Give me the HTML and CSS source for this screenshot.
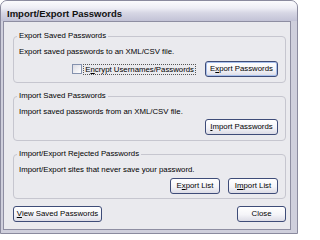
FILE: index.html
```
<!DOCTYPE html>
<html>
<head>
<meta charset="utf-8">
<link rel="stylesheet" href="styles.css">
</head>
<body>
<div class="window">
  <div class="titlebar">Import/Export Passwords</div>
  <div class="client">
    <fieldset class="group g1">
      <legend>Export Saved Passwords</legend>
      <div class="desc">Export saved passwords to an XML/CSV file.</div>
      <div class="row">
        <span class="check"></span>
        <span class="checklabel">E<u>n</u>crypt Usernames/Passwords</span>
        <span class="btn btn-focus w73">E<u>x</u>port Passwords</span>
      </div>
    </fieldset>
    <fieldset class="group g2">
      <legend>Import Saved Passwords</legend>
      <div class="desc">Import saved passwords from an XML/CSV file.</div>
      <div class="row">
        <span class="btn w73"><u>I</u>mport Passwords</span>
      </div>
    </fieldset>
    <fieldset class="group g3">
      <legend>Import/Export Rejected Passwords</legend>
      <div class="desc">Import/Export sites that never save your password.</div>
      <div class="row gap8">
        <span class="btn w50">E<u>x</u>port List</span>
        <span class="btn w50">I<u>m</u>port List</span>
      </div>
    </fieldset>
    <div class="bottom">
      <span class="btn w89"><u>V</u>iew Saved Passwords</span>
      <span class="btn w49">Close</span>
    </div>
  </div>
</div>
</body>
</html>
```
FILE: styles.css
```
html, body {
  margin: 0;
  padding: 0;
  background: #ffffff;
}
body {
  width: 300px;
  height: 234px;
  overflow: hidden;
  font-family: "Liberation Sans", Arial, sans-serif;
  font-size: 7.8px;
  color: #000;
}
.window {
  width: 298px;
  height: 234px;
  box-sizing: border-box;
  border: 1px solid #8a8a9e;
  border-radius: 7px 7px 0 0;
  background: #cfcfdc;
  display: flex;
  flex-direction: column;
}
.titlebar {
  height: 20px;
  box-sizing: border-box;
  padding: 7px 0 0 6px;
  line-height: 12px;
  font-size: 9.5px;
  font-weight: bold;
  color: #111;
  border-radius: 6px 6px 0 0;
  background: linear-gradient(to bottom, #fbfbfd 0%, #eeeef5 35%, #d6d6e4 60%, #c2c2d6 100%);
}
.client {
  margin: 0 6px 0 2px;
  height: 209px;
  box-sizing: border-box;
  border: 1px solid #8e8ea2;
  background: #eaeaee;
  padding: 9px 4px 0 9px;
  display: flex;
  flex-direction: column;
}
.group {
  margin: 0;
  border: 1px solid #c6c6cf;
  border-radius: 4px;
  padding: 0 7px 5px 5px;
  min-inline-size: 0;
}
.group legend {
  padding: 0 2px;
  margin-left: -2px;
  line-height: 10px;
}
.g2, .g3 {
  margin-top: 8px;
}
.g3 {
  padding-bottom: 4px;
}
.desc {
  line-height: 10px;
  margin-top: 6px;
  white-space: nowrap;
}
.row {
  display: flex;
  justify-content: flex-end;
  align-items: center;
  margin-top: 4px;
}
.g2 .row {
  margin-top: 2px;
}
.g3 .row {
  margin-top: 3px;
}
.gap8 {
  gap: 8px;
}
.check {
  width: 10px;
  height: 10px;
  box-sizing: border-box;
  border: 1px solid #8592ae;
  background: linear-gradient(135deg, #dcdce4 0%, #ffffff 100%);
  margin-right: 1px;
}
.checklabel {
  border: 1px dotted #555;
  padding: 0 1px;
  line-height: 9px;
  margin-right: 9px;
  white-space: nowrap;
}
.btn {
  height: 16px;
  box-sizing: border-box;
  border: 1px solid #3e4c78;
  border-radius: 3px;
  background: linear-gradient(to bottom, #ffffff 0%, #f4f4f8 55%, #dcdce6 100%);
  display: flex;
  align-items: center;
  justify-content: center;
  white-space: nowrap;
  line-height: 10px;
}
.btn-focus {
  box-shadow: inset 0 0 0 1px #a8c0ec;
}
.w73 { width: 73px; }
.w50 { width: 50px; }
.w89 { width: 89px; }
.w49 { width: 49px; }
.bottom {
  display: flex;
  justify-content: space-between;
  margin-top: 7px;
}
u {
  text-decoration-thickness: 1px;
  text-underline-offset: 1px;
}
```
